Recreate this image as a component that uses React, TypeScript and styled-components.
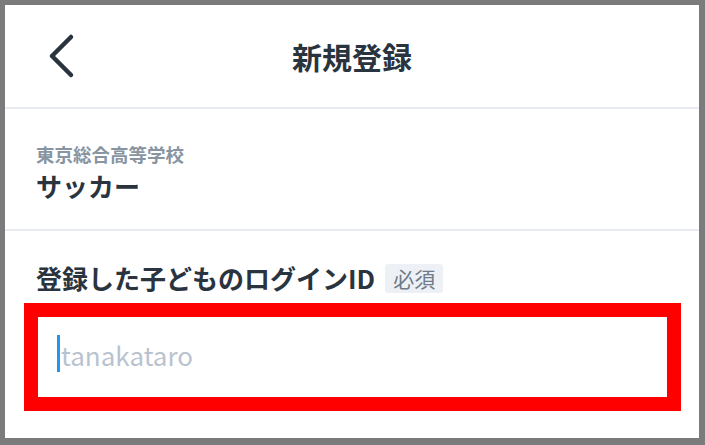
import { createGlobalStyle, styled } from "styled-components";

const GlobalStyle = createGlobalStyle`
  html, body {
    margin: 0;
    padding: 0;
    background: #ffffff;
  }
  body {
    font-family: "Noto Sans CJK JP", "Noto Sans", sans-serif;
    color: #2a343f;
  }
  * {
    box-sizing: border-box;
  }
`;

const Frame = styled.div`
  width: 705px;
  height: 445px;
  display: flex;
  flex-direction: column;
  background: #ffffff;
  border-style: solid;
  border-color: #7b7b7b;
  border-width: 5px 6px 7px 5px;
  overflow: hidden;
`;

const Header = styled.header`
  height: 104px;
  flex: none;
  display: grid;
  grid-template-columns: 1fr auto 1fr;
  align-items: center;
  padding: 0 37px;
  border-bottom: 2px solid #e8ecf1;
`;

const BackButton = styled.button`
  justify-self: start;
  display: flex;
  align-items: center;
  padding: 0;
  border: none;
  background: none;
  color: #2a343f;
  cursor: pointer;
  & svg {
    width: 34px;
    height: 50px;
  }
`;

const Title = styled.h1`
  margin: 0;
  font-size: 30px;
  font-weight: 700;
  line-height: 40px;
  color: #2a343f;
`;

const Section = styled.section<{ $divider?: boolean }>`
  display: flex;
  flex-direction: column;
  border-bottom: ${({ $divider }) => ($divider ? "2px solid #e8ecf1" : "none")};
`;

const SchoolInfo = styled(Section)`
  padding: 32px 31px 25px;
`;

const SchoolName = styled.p`
  margin: 0;
  font-size: 18.5px;
  font-weight: 700;
  line-height: 26px;
  color: #8794a1;
`;

const TeamName = styled.p`
  margin: 1px 0 0;
  font-size: 26px;
  font-weight: 700;
  line-height: 36px;
  color: #2a343f;
`;

const FormSection = styled(Section)`
  padding: 29px 18px 0 19px;
`;

const LabelRow = styled.label`
  display: flex;
  align-items: center;
  gap: 10px;
  padding-left: 12px;
  height: 36px;
`;

const LabelText = styled.span`
  font-size: 26px;
  font-weight: 700;
  line-height: 36px;
  color: #2a343f;
`;

const Badge = styled.span`
  display: inline-flex;
  align-items: center;
  height: 29px;
  padding: 0 8px;
  border-radius: 3px;
  background: #edf1f6;
  color: #6f7b88;
  font-size: 21px;
  line-height: 29px;
  font-weight: 400;
`;

const Highlight = styled.div`
  margin-top: 7px;
  border: 14px solid #ff0000;
  height: 108px;
`;

const Field = styled.div`
  position: relative;
  height: 100%;
`;

const Input = styled.input`
  width: 100%;
  height: 100%;
  border: none;
  outline: none;
  padding: 0 0 6px 23px;
  font-family: "Noto Sans CJK JP", "Noto Sans", sans-serif;
  font-size: 26px;
  color: #2a343f;
  background: transparent;
  &::placeholder {
    color: #b9c3cf;
  }
`;

const Caret = styled.span`
  position: absolute;
  left: 19px;
  top: 18px;
  width: 3px;
  height: 37px;
  background: #2196f3;
`;

export default function App() {
  return (
    <>
      <GlobalStyle />
      <Frame>
        <Header>
          <BackButton aria-label="戻る">
            <svg viewBox="0 0 34 50" fill="none">
              <path
                d="M29 6 L10 25 L29 44"
                stroke="currentColor"
                strokeWidth="4.5"
                strokeLinecap="round"
                strokeLinejoin="round"
              />
            </svg>
          </BackButton>
          <Title>新規登録</Title>
          <span />
        </Header>
        <SchoolInfo $divider>
          <SchoolName>東京総合高等学校</SchoolName>
          <TeamName>サッカー</TeamName>
        </SchoolInfo>
        <FormSection>
          <LabelRow htmlFor="login-id">
            <LabelText>登録した子どものログインID</LabelText>
            <Badge>必須</Badge>
          </LabelRow>
          <Highlight>
            <Field>
              <Input id="login-id" placeholder="tanakataro" />
              <Caret />
            </Field>
          </Highlight>
        </FormSection>
      </Frame>
    </>
  );
}
